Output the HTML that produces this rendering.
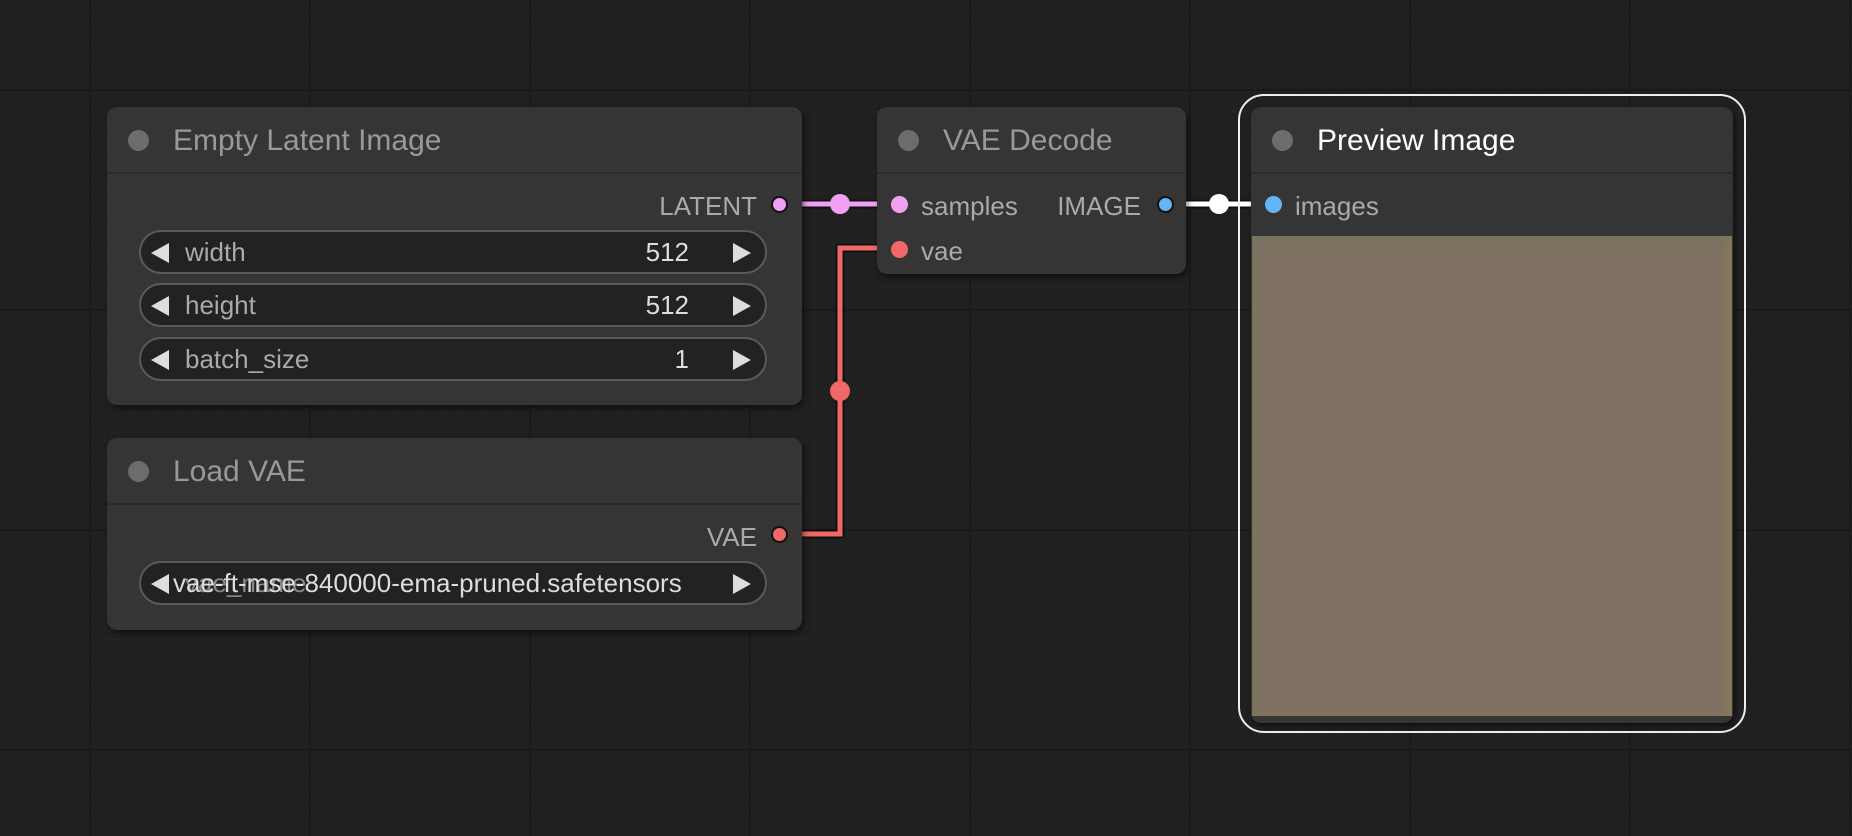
<!DOCTYPE html>
<html><head><meta charset="utf-8"><style>
*{margin:0;padding:0;box-sizing:border-box}
body{width:1852px;height:836px;overflow:hidden;background:#202020;font-family:"Liberation Sans",sans-serif;position:relative;
background-image:
linear-gradient(to right,#1a1a1a 2px,transparent 2px),
linear-gradient(to bottom,#1a1a1a 2px,transparent 2px),
linear-gradient(to right,#242424 1px,transparent 1px),
linear-gradient(to bottom,#242424 1px,transparent 1px);
background-size:220px 220px,220px 220px,22px 22px,22px 22px;
background-position:89px 89px,89px 89px,1px 1px,1px 1px;}
.node{position:absolute;background:#353535;border-radius:10px;box-shadow:2px 3px 6px rgba(0,0,0,.5)}
.title{height:67px;border-bottom:2px solid #2b2b2b;position:relative;color:#999;font-size:30px;line-height:67px;padding-left:66px}
.title .d{position:absolute;left:21px;top:23px;width:21px;height:21px;border-radius:50%;background:#6c6c6c}
.t{position:absolute;font-size:26px;color:#aaa;white-space:nowrap}
.dot{position:absolute;width:17px;height:17px;border-radius:50%;border:2px solid #111;margin:-8px 0 0 -8px}
.w{position:absolute;left:32px;right:35px;height:44px;background:#222;border:2px solid #5a5a5a;border-radius:22px;color:#aaa;font-size:26px;line-height:40px;white-space:nowrap}
.w .l{position:absolute;left:10px;top:11px;width:0;height:0;border-top:10px solid transparent;border-bottom:10px solid transparent;border-right:18px solid #ddd}
.w .r{position:absolute;right:14px;top:11px;width:0;height:0;border-top:10px solid transparent;border-bottom:10px solid transparent;border-left:18px solid #ddd}
.w .n{position:absolute;left:44px}
.w .v{position:absolute;right:76px;color:#ddd}
</style></head><body>
<svg width="1852" height="836" style="position:absolute;left:0;top:0">
<path d="M790 204 H900" stroke="#000" stroke-opacity=".5" stroke-width="9" fill="none"/>
<path d="M790 204 H900" stroke="#f2a0f2" stroke-width="5" fill="none"/>
<circle cx="840" cy="204" r="10" fill="#f2a0f2"/>
<path d="M780 534 H840 V248 H900" stroke="#000" stroke-opacity=".5" stroke-width="9" fill="none"/>
<path d="M780 534 H840 V248 H900" stroke="#f06868" stroke-width="5" fill="none"/>
<circle cx="840" cy="391" r="10" fill="#f06868"/>
<path d="M1170 204 H1275" stroke="#000" stroke-opacity=".5" stroke-width="9" fill="none"/>
<path d="M1170 204 H1275" stroke="#fff" stroke-width="5" fill="none"/>
<circle cx="1219" cy="204" r="10" fill="#fff"/>
</svg>

<div class="node" style="left:107px;top:107px;width:695px;height:298px">
<div class="title"><span class="d"></span>Empty Latent Image</div>
<div class="t" style="right:45px;top:84px">LATENT</div>
<div class="dot" style="left:672px;top:97px;background:#f2a0f2"></div>
<div class="w" style="top:123px"><span class="l"></span><span class="n">width</span><span class="v">512</span><span class="r"></span></div>
<div class="w" style="top:176px"><span class="l"></span><span class="n">height</span><span class="v">512</span><span class="r"></span></div>
<div class="w" style="top:230px"><span class="l"></span><span class="n">batch_size</span><span class="v">1</span><span class="r"></span></div>
</div>

<div class="node" style="left:107px;top:438px;width:695px;height:192px">
<div class="title"><span class="d"></span>Load VAE</div>
<div class="t" style="right:45px;top:84px">VAE</div>
<div class="dot" style="left:672px;top:96px;background:#f06868"></div>
<div class="w" style="top:123px"><span class="l"></span><span class="n" style="left:44px;color:#888">vae_name</span><span class="n" style="left:32px;color:#ddd">vae-ft-mse-840000-ema-pruned.safetensors</span><span class="r"></span></div>
</div>

<div class="node" style="left:877px;top:107px;width:309px;height:167px">
<div class="title"><span class="d"></span>VAE Decode</div>
<div class="dot" style="left:22px;top:97px;background:#f2a0f2;border-color:transparent"></div>
<div class="t" style="left:44px;top:84px">samples</div>
<div class="dot" style="left:22px;top:142px;background:#f06868;border-color:transparent"></div>
<div class="t" style="left:44px;top:129px">vae</div>
<div class="t" style="right:45px;top:84px">IMAGE</div>
<div class="dot" style="left:288px;top:97px;background:#64b5f6"></div>
</div>

<div style="position:absolute;left:1238px;top:94px;width:508px;height:639px;border:2px solid #eee;border-radius:26px"></div>
<div class="node" style="left:1251px;top:107px;width:482px;height:616px">
<div class="title" style="color:#fff"><span class="d"></span>Preview Image</div>
<div class="dot" style="left:22px;top:97px;background:#64b5f6;border-color:transparent"></div>
<div class="t" style="left:44px;top:84px">images</div>
<div style="position:absolute;left:1px;top:129px;width:480px;height:480px;background:#807262;box-shadow:inset 0 6px 8px rgba(110,120,95,.5),inset -6px 0 6px rgba(150,130,80,.5)"></div>
</div>
</body></html>
